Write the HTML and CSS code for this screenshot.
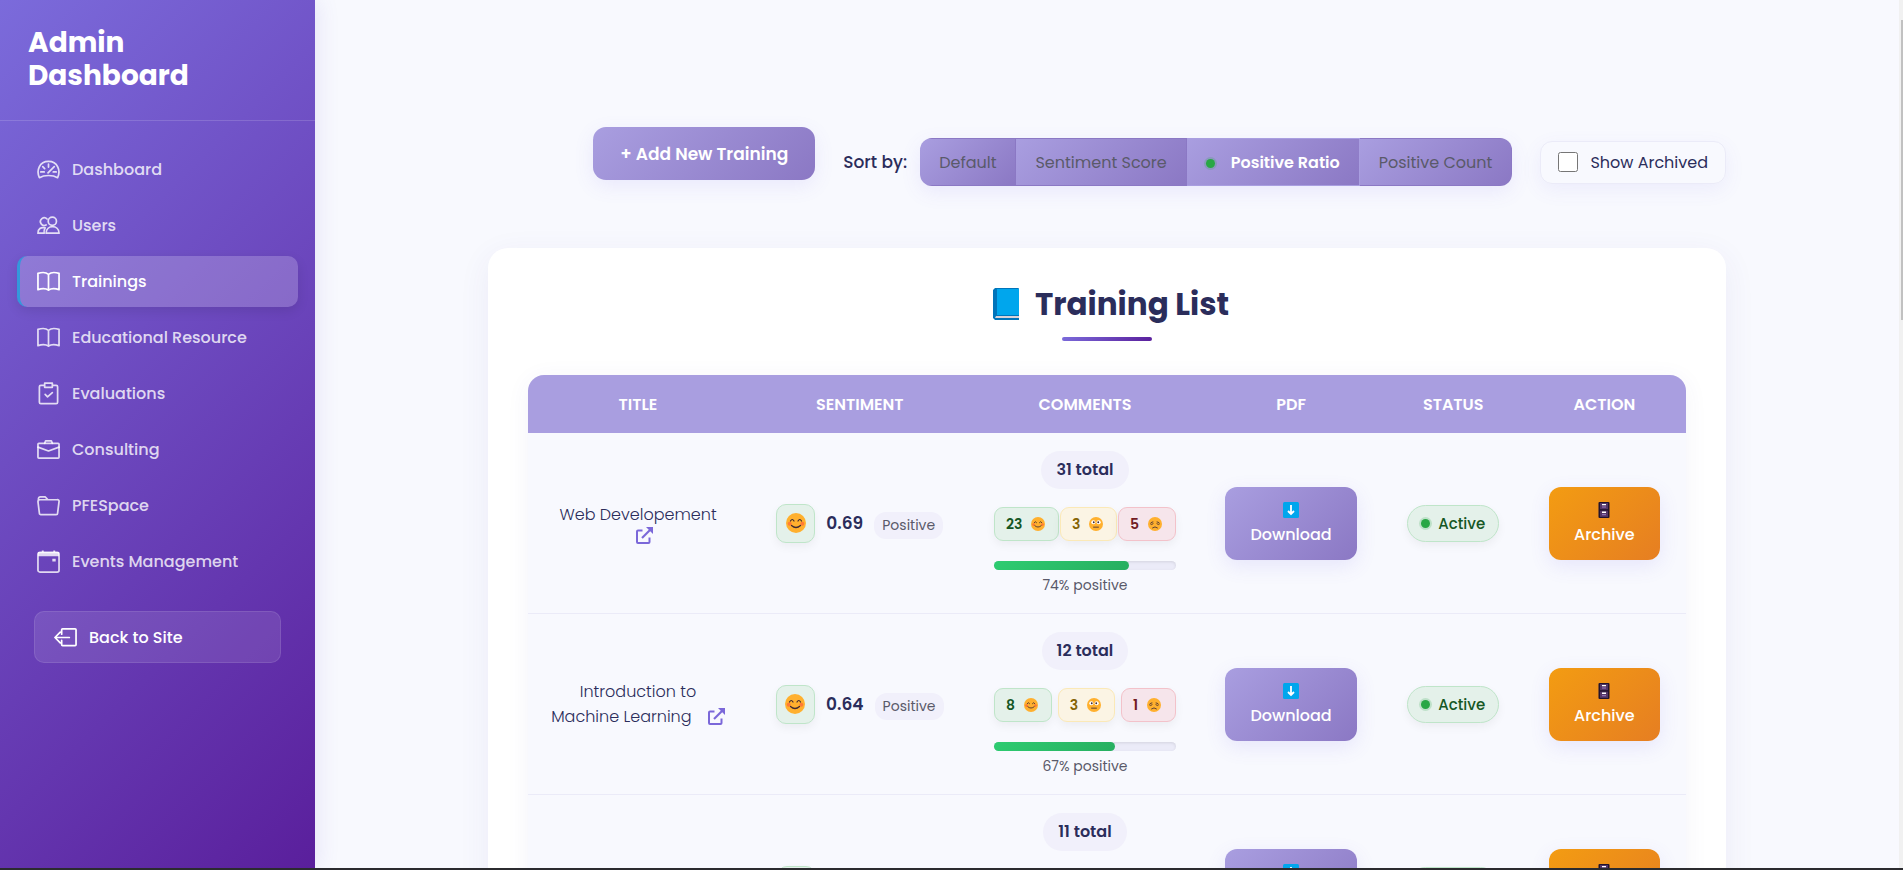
FILE: index.html
```
<!DOCTYPE html>
<html lang="en">
<head>
<meta charset="utf-8">
<title>Admin Dashboard</title>
<link rel="stylesheet" href="styles.css">
</head>
<body>
<svg class="sprite" aria-hidden="true">
  <symbol id="smile" viewBox="0 0 20 20"><circle cx="10" cy="10" r="10" fill="#ffb02e"/><circle cx="3.700" cy="10.800" r="2" fill="#ff7a36"/><circle cx="16.300" cy="10.800" r="2" fill="#ff7a36"/><path d="M4.500 8q1.700-3 3.500 0M12 8q1.800-3 3.500 0M5.500 12.500q4.500 4 9 0" fill="none" stroke="#402a32" stroke-width="1.200" stroke-linecap="round"/></symbol>
  <symbol id="flat" viewBox="0 0 20 20"><circle cx="10" cy="10" r="10" fill="#ffb02e"/><circle cx="6.200" cy="7.500" r="2.900" fill="#fff"/><circle cx="13.800" cy="7.500" r="2.900" fill="#fff"/><circle cx="6.800" cy="7.500" r="1.300" fill="#402a32"/><circle cx="13.200" cy="7.500" r="1.300" fill="#402a32"/><path d="M6.500 14.500h7" stroke="#402a32" stroke-width="1.200" stroke-linecap="round"/></symbol>
  <symbol id="sad" viewBox="0 0 20 20"><circle cx="10" cy="10" r="10" fill="#ffb02e"/><path d="M3.500 10q2 2 4-.5M12.500 9.500q2 2.500 4 .5M6.500 15.500q3.500-3 7 0M4.500 8l2.500-1M15.500 8L13 7" fill="none" stroke="#402a32" stroke-width="1.200" stroke-linecap="round"/></symbol>
  <symbol id="book" viewBox="0 0 24 24"><path d="M12 4.500C9.500 2.300 5 2.300 1 3.500v17c4-1.200 8.500-1.200 11 .5 2.500-1.700 7-1.700 11-.5v-17C19 2.300 14.500 2.300 12 4.500zV21"/></symbol>
  <symbol id="link" viewBox="0 0 17 17"><path d="M6.500 3.500H2a1 1 0 0 0-1 1V15a1 1 0 0 0 1 1h10.500a1 1 0 0 0 1-1v-4.500" fill="none" stroke="#7b68d9" stroke-width="2"/><path d="M6 11L14 3" stroke="#7b68d9" stroke-width="2.200"/><path d="M10 0h7v7z" fill="#7b68d9"/></symbol>
  <symbol id="down" viewBox="0 0 16 16"><rect width="16" height="16" rx="1.500" fill="#00a6ed"/><path d="M8 3v9M5 9l3 3 3-3" fill="none" stroke="#fff" stroke-width="1.800"/></symbol>
  <symbol id="cabinet" viewBox="0 0 16 16"><rect x="2.500" width="11" height="16" rx="1" fill="#21132f"/><rect x="4" y="1" width="8" height="6.200" fill="#533566"/><rect x="4" y="8.700" width="8" height="6.200" fill="#533566"/><path d="M6 2.600h4M6 10.300h4" stroke="#fff" stroke-width="1.400"/><path d="M6 5h4M6 12.700h4" stroke="#9b7bc0"/></symbol>
</svg>
<div class="app">
  <aside class="sidebar">
    <h1 class="brand">Admin<br>Dashboard</h1>
    <nav class="nav">
      <a class="nav-item" href="#"><svg class="icon" viewBox="0 0 24 24"><path d="M2.500 20.500C-1 13 2.500 3.500 12 3.500S25 13 21.500 20.500c-5-3-14-3-19 0z"/><path d="M12 6.500v3M4 14.500h3.500M17 14.500h3M6 9l2 2M18 9l-6.500 6.500" /></svg>Dashboard</a>
      <a class="nav-item" href="#"><svg class="icon" viewBox="0 0 24 24"><path d="M10.500 5.200A4 4 0 1 0 9.500 11.500"/><circle cx="16" cy="7.500" r="4.300"/><path d="M9.500 20c0-9 13.500-9 13.500 0zM7.500 20H1c0-4.500 3-6.500 7.500-5.500-1.200 2-1.500 3.500-1 5.500z"/></svg>Users</a>
      <a class="nav-item active" href="#"><svg class="icon"><use href="#book"/></svg>Trainings</a>
      <a class="nav-item" href="#"><svg class="icon"><use href="#book"/></svg>Educational Resource</a>
      <a class="nav-item" href="#"><svg class="icon" viewBox="0 0 24 24"><path d="M8 3.500H4a1.500 1.500 0 0 0-1.500 1.500v16A1.500 1.500 0 0 0 4 22.500h16a1.500 1.500 0 0 0 1.500-1.500V5A1.500 1.500 0 0 0 20 3.500h-4M8 1.200h8v4.300H8zM8.500 13l2.500 2.500L16 11"/></svg>Evaluations</a>
      <a class="nav-item" href="#"><svg class="icon" viewBox="0 0 24 24"><rect x="1" y="5.500" width="22" height="15.500" rx="1"/><path d="M1 9.500l11 4 11-4M8 5.500L9 3h6l1 2.500"/></svg>Consulting</a>
      <a class="nav-item" href="#"><svg class="icon" viewBox="0 0 24 24"><path d="M1.500 7V5a2 2 0 0 1 2-2h5l3 3H21a1.700 1.700 0 0 1 2 2l-1.500 12a1.500 1.500 0 0 1-1.500 1.500H4A1.500 1.500 0 0 1 2.500 20L1 8q0-2 2-2h8.500"/></svg>PFESpace</a>
      <a class="nav-item" href="#"><svg class="icon" viewBox="0 0 24 24"><rect x="1" y="2.500" width="22" height="20.500" rx="2"/><path class="solid" d="M1 2h4V.500h2V2h10V.500h2V2h4v4.500H1zM16 9h3.500v3H16z"/></svg>Events Management</a>
    </nav>
    <a class="back" href="#"><svg class="icon" viewBox="0 0 24 24"><path d="M8 8.500V4a1 1 0 0 1 1-1h13a1 1 0 0 1 1 1v15.500a1 1 0 0 1-1 1H9a1 1 0 0 1-1-1V15M16 12H1.500M6.500 6.500L1 12l5.500 5.500"/></svg>Back to Site</a>
  </aside>

  <main class="main">
    <div class="toolbar">
      <button class="add" type="button">+ Add New Training</button>
      <span class="sort-label" id="sort-label">Sort by:</span>
      <div class="sort" role="group" aria-labelledby="sort-label">
        <button type="button">Default</button><button type="button">Sentiment Score</button><button type="button" class="on"><i class="dot"></i>Positive Ratio</button><button type="button">Positive Count</button>
      </div>
      <label class="archived"><input type="checkbox">Show Archived</label>
    </div>

    <section class="card">
      <h2 class="card-title"><svg class="title-icon" viewBox="0 0 26 32"><path d="M2 0h23a1 1 0 0 1 1 1v27H0V2z" fill="#0074ba"/><path d="M4 1h22v26H4z" fill="#00a6ed"/><path d="M2 28h24v2H2z" fill="#d8d2d8"/><path d="M0 27v3l2 2h24v-2H2l1-2h23v-1z" fill="#0074ba"/></svg>Training List</h2>
      <table class="table">
        <colgroup><col class="c-title"><col class="c-sent"><col class="c-com"><col class="c-pdf"><col class="c-stat"><col class="c-act"></colgroup>
        <thead><tr><th>TITLE</th><th>SENTIMENT</th><th>COMMENTS</th><th>PDF</th><th>STATUS</th><th>ACTION</th></tr></thead>
        <tbody>
          <tr>
            <td class="name">Web Developement <a class="ext own-line" href="#" aria-label="Open"><svg><use href="#link"/></svg></a></td>
            <td><div class="sent"><span class="face"><svg><use href="#smile"/></svg></span><b>0.69</b><span class="tag">Positive</span></div></td>
            <td><div class="com"><span class="total">31 total</span><div class="badges"><span class="badge good">23<svg><use href="#smile"/></svg></span><span class="badge mid">3<svg><use href="#flat"/></svg></span><span class="badge bad">5<svg><use href="#sad"/></svg></span></div><div class="bar"><div class="fill" style="width:74%"></div></div><span class="pct">74% positive</span></div></td>
            <td><button class="action" type="button"><svg><use href="#down"/></svg>Download</button></td>
            <td><span class="status"><i class="dot"></i>Active</span></td>
            <td><button class="action orange" type="button"><svg><use href="#cabinet"/></svg>Archive</button></td>
          </tr>
          <tr>
            <td class="name">Introduction to Machine Learning <a class="ext" href="#" aria-label="Open"><svg><use href="#link"/></svg></a></td>
            <td><div class="sent"><span class="face"><svg><use href="#smile"/></svg></span><b>0.64</b><span class="tag">Positive</span></div></td>
            <td><div class="com"><span class="total">12 total</span><div class="badges"><span class="badge good">8<svg><use href="#smile"/></svg></span><span class="badge mid">3<svg><use href="#flat"/></svg></span><span class="badge bad">1<svg><use href="#sad"/></svg></span></div><div class="bar"><div class="fill" style="width:66.7%"></div></div><span class="pct">67% positive</span></div></td>
            <td><button class="action" type="button"><svg><use href="#down"/></svg>Download</button></td>
            <td><span class="status"><i class="dot"></i>Active</span></td>
            <td><button class="action orange" type="button"><svg><use href="#cabinet"/></svg>Archive</button></td>
          </tr>
          <tr>
            <td class="name"></td>
            <td><div class="sent"><span class="face"><svg><use href="#smile"/></svg></span><b></b><span class="tag"></span></div></td>
            <td><div class="com"><span class="total">11 total</span></div></td>
            <td><button class="action" type="button"><svg><use href="#down"/></svg>Download</button></td>
            <td><span class="status"><i class="dot"></i>Active</span></td>
            <td><button class="action orange" type="button"><svg><use href="#cabinet"/></svg>Archive</button></td>
          </tr>
        </tbody>
      </table>
    </section>
  </main>
  <div class="scroll"><div class="thumb"></div></div>
</div>
</body>
</html>
```
FILE: styles.css
```
* { box-sizing: border-box; }
body {
  margin: 0;
  font-family: Poppins, Inter, "Liberation Sans", sans-serif;
  font-size: 16px;
  color: #2b2d5b;
  background: #f8f9fe;
}
a { color: inherit; text-decoration: none; }
button { font: inherit; border: 0; cursor: pointer; }
.sprite { display: none; }
.app {
  display: flex;
  height: 100vh;
  overflow: hidden;
  border-bottom: 2px solid #2b2b2f;
}

/* Sidebar */
.sidebar {
  flex: 0 0 315px;
  background: linear-gradient(135deg, #7b6bdb, #5a1f9c);
  box-shadow: 4px 0 20px rgba(90, 70, 200, .1);
}
.brand {
  margin: 0;
  padding: 26px 28px 28px;
  border-bottom: 1px solid rgba(255, 255, 255, .15);
  font-size: 28px;
  font-weight: 700;
  line-height: 33px;
  color: #fff;
}
.nav {
  display: grid;
  gap: 5px;
  padding: 23px 17px;
}
.nav-item, .back {
  display: flex;
  align-items: center;
  gap: 12px;
  height: 51px;
  padding-left: 20px;
  border-radius: 10px;
  font-weight: 500;
  color: rgba(255, 255, 255, .8);
}
.icon {
  width: 23px;
  height: 23px;
  fill: none;
  stroke: currentColor;
  stroke-width: 1.800;
  stroke-linejoin: round;
  stroke-linecap: round;
}
.icon .solid { fill: currentColor; stroke: none; }
.nav-item.active {
  color: #fff;
  padding-left: 17px;
  border-left: 3px solid #3498db;
  background: rgba(255, 255, 255, .2);
  box-shadow: 0 4px 12px rgba(0, 0, 0, .1);
}
.back {
  height: 52px;
  margin: 1px 34px 0;
  padding-left: 19px;
  border: 1px solid rgba(255, 255, 255, .1);
  background: rgba(255, 255, 255, .1);
  color: #fff;
}

/* Toolbar */
.main {
  flex: 1;
  min-width: 0;
  padding: 127px 173px 0;
}
.toolbar {
  display: flex;
  justify-content: flex-end;
  align-items: center;
  height: 70px;
}
.add {
  align-self: flex-start;
  height: 53px;
  padding: 0 27px;
  margin-right: 28px;
  border-radius: 13px;
  background: linear-gradient(135deg, #a99ee0, #8b78c4);
  box-shadow: 0 6px 20px rgba(108, 92, 231, .1);
  font-size: 17px;
  font-weight: 600;
  color: #fff;
}
.sort-label { margin-right: 13px; font-size: 17px; font-weight: 500; }
.sort {
  display: flex;
  border-radius: 12px;
  overflow: hidden;
  box-shadow: 0 6px 20px rgba(108, 92, 231, .1);
}
.sort button {
  height: 48px;
  padding: 0 19px;
  border: 1px solid #8b78c4;
  border-width: 1px 1px 1px 0;
  background: linear-gradient(135deg, #a99ee0, #8b78c4);
  color: #5a5a6a;
}
.sort .on {
  border-color: #a99ee0;
  font-weight: 600;
  color: #fff;
}
.dot {
  display: inline-block;
  width: 9px;
  height: 9px;
  border-radius: 50%;
  background: #28a745;
  box-shadow: 0 0 0 2px rgba(40, 167, 69, .2);
}
.sort .dot { margin-right: 16px; }
.archived {
  display: flex;
  align-items: center;
  gap: 12px;
  height: 43px;
  margin-left: 28px;
  padding: 0 17px;
  border: 1px solid #ebebf8;
  border-radius: 12px;
  box-shadow: 0 6px 20px rgba(108, 92, 231, .08);
}
.archived input { width: 20px; height: 20px; margin: 0; }

/* Card */
.card {
  margin-top: 51px;
  padding: 35px 40px;
  border-radius: 20px;
  background: #fff;
  box-shadow: 0 8px 32px rgba(70, 60, 160, .07);
}
.card-title {
  display: flex;
  justify-content: center;
  align-items: center;
  gap: 16px;
  position: relative;
  margin: 0 0 34px;
  height: 58px;
  padding: 0 0 16px 8px;
  font-size: 31px;
  line-height: 40px;
  font-weight: 700;
}
.card-title::after {
  content: "";
  position: absolute;
  bottom: 0;
  left: calc(50% - 45px);
  width: 90px;
  height: 4px;
  border-radius: 2px;
  background: linear-gradient(135deg, #7b6bdb, #5a1f9c);
}
.title-icon { width: 26px; height: 32px; }
.table {
  width: 100%;
  table-layout: fixed;
  border-collapse: separate;
  border-spacing: 0;
  border-radius: 16px;
  overflow: hidden;
  background: #f8f9fe;
  box-shadow: 0 4px 24px rgba(70, 60, 160, .06);
}
.c-title { width: 19%; }
.c-sent { width: 19.300%; }
.c-com { width: 19.600%; }
.c-pdf { width: 16%; }
.c-stat { width: 12%; }
.c-act { width: 14.100%; }
th {
  height: 58px;
  padding: 0;
  background: #a99ee0;
  font-weight: 600;
  font-size: 16px;
  color: #fff;
}
td {
  height: 181px;
  padding: 0;
  border-bottom: 1px solid #ebebf8;
  text-align: center;
  vertical-align: middle;
}
.name { padding: 0 20px; line-height: 25px; font-weight: 300; }
.ext { margin-left: 12px; }
.ext svg { width: 17px; height: 17px; vertical-align: -3px; }
.ext.own-line { display: block; }
.own-line svg { display: block; margin: 0 auto; }
.sent {
  display: flex;
  align-items: center;
  justify-content: center;
  gap: 11px;
}
.sent b { font-size: 17px; font-weight: 600; min-width: 36px; }
.face {
  display: grid;
  place-items: center;
  width: 39px;
  height: 39px;
  border: 1px solid #bfe5c9;
  border-radius: 10px;
  background: #e4f1ea;
  box-shadow: 0 4px 10px rgba(0, 0, 0, .05);
}
.face svg { width: 20px; height: 20px; }
.tag {
  min-width: 69px;
  margin-top: 4px;
  padding: 0 8px;
  border-radius: 12px;
  background: #f1f0fb;
  font-size: 14px;
  line-height: 27px;
  color: #5a5a6a;
}
.com {
  display: flex;
  flex-direction: column;
  align-items: center;
  width: 182px;
  min-height: 144px;
  margin: 0 auto;
}
.total {
  padding: 0 15px;
  border-radius: 19px;
  background: #f1f0fb;
  line-height: 38px;
  font-weight: 600;
}
.badges {
  display: flex;
  justify-content: space-between;
  width: 100%;
  height: 34px;
  margin: 18px 0 20px;
}
.badge {
  display: flex;
  align-items: center;
  gap: 9px;
  min-width: 55px;
  padding: 0 13px 0 11px;
  border: 1px solid;
  border-radius: 9px;
  font-size: 14px;
  font-weight: 600;
  box-shadow: 0 4px 10px rgba(0, 0, 0, .05);
}
.badge svg { width: 14px; height: 14px; }
.good { background: #e4f1ea; border-color: #bfe5c9; color: #155724; }
.mid { background: #fbf4e4; border-color: #fbe9b7; color: #856404; }
.bad { background: #f6e5eb; border-color: #f3c2ca; color: #721c24; }
.bar {
  width: 100%;
  height: 9px;
  border-radius: 5px;
  background: #ebebf8;
  box-shadow: inset 0 1px 3px rgba(0, 0, 0, .1);
}
.fill {
  height: 100%;
  border-radius: 5px;
  background: linear-gradient(135deg, #2ecc71, #27ae60);
}
.pct {
  margin-top: 5px;
  font-size: 14px;
  line-height: 20px;
  color: #5a5a6a;
}
.action {
  display: inline-flex;
  flex-direction: column;
  align-items: center;
  justify-content: center;
  gap: 4px;
  height: 73px;
  padding: 3px 25px 0;
  border-radius: 12px;
  background: linear-gradient(135deg, #a99ee0, #8b78c4);
  box-shadow: 0 6px 20px rgba(108, 92, 231, .12);
  font-weight: 500;
  color: #fff;
}
.action svg { width: 16px; height: 16px; }
.orange { background: linear-gradient(135deg, #f39c12, #e67e22); }
.status {
  display: inline-flex;
  align-items: center;
  gap: 8px;
  height: 37px;
  padding: 0 13px;
  border: 1px solid #bfe5c9;
  border-radius: 19px;
  background: #e4f1ea;
  box-shadow: 0 4px 10px rgba(0, 0, 0, .05);
  font-size: 15px;
  font-weight: 500;
  color: #155724;
}

/* Scroll track */
.scroll { flex: 0 0 4px; padding: 20px 0 0 2px; background: #f1f1f1; }
.thumb { height: 300px; background: #c1c1c1; }
```
